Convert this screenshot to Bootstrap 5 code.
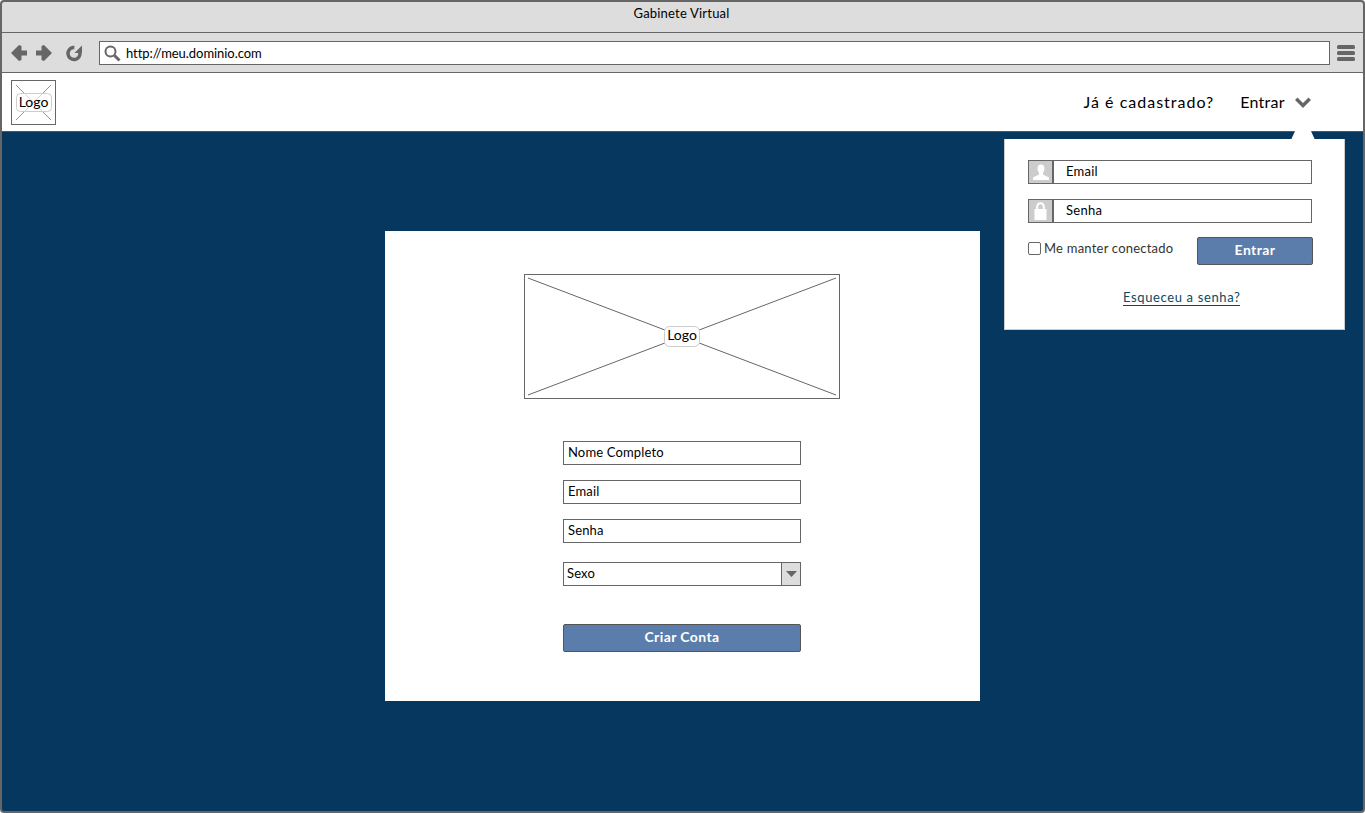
<!DOCTYPE html>
<html lang="pt">
<head>
<meta charset="utf-8">
<title>Gabinete Virtual</title>
<link href="https://cdn.jsdelivr.net/npm/bootstrap@5.3.0/dist/css/bootstrap.min.css" rel="stylesheet">
<style>
html,body{height:813px;overflow:hidden;background:#fff}
body{font-family:"Lato","Noto Sans",sans-serif;color:#000;font-size:13px}
.win{height:813px;width:1365px;border:2px solid #666;border-radius:4px;overflow:hidden;position:relative;background:#05375f}
.titlebar{height:31px;background:#ddd;border-bottom:1px solid #666;font-size:13px;line-height:22px;letter-spacing:.2px;padding-right:2px}
.toolbar{height:40px;background:#ddd;border-bottom:1px solid #666;padding:1px 7px 0 8px}
.urlbox{height:24px;width:1231px;margin-left:15px;margin-right:7px;background:#fff;border:1px solid #666;padding-left:4px;gap:5px;line-height:1;letter-spacing:-.05px}
.hdr{height:59px;background:#fff;border-bottom:1px solid #555;padding:0 52px 0 9px}
.logo-sm{width:45px;height:45px;flex:none}
.hdr-txt{font-size:16px}
.hdr-q{letter-spacing:1px}
.hdr-in{letter-spacing:.3px;margin-left:26px}
.hdr-chev{margin-left:10px}
.stage{height:680px;padding:99px 0 0 383px;position:relative}
.sheet{width:595px;height:470px;background:#fff;padding-top:43px}
.logo-lg{width:316px;height:125px;display:block;margin:0 0 42px 139px}
.fld{width:238px;height:24px;border:1px solid #666;background:#fff;padding-left:4px;line-height:21px;letter-spacing:.15px;margin:0 auto 15px 178px}
.sel{margin-top:19px;margin-bottom:38px;padding:0;padding-left:3px}
.sel-arrow{width:19px;height:22px;background:#ddd;border-left:1px solid #666;flex:none}
.act{background:#5a7dab;border:1px solid #555;border-radius:2px;color:#fff;font-weight:700;font-size:14px;letter-spacing:.4px;padding:0 0 2px;line-height:1}
.act:hover{background:#5a7dab;color:#fff;border-color:#555}
.act-wide{display:block;width:238px;height:28px;margin-left:178px}
.pop{position:absolute;left:1002px;top:7px;width:341px;height:191px;background:#fff;border:1px solid #ccc;border-top:0;padding:21px 32px 0 23px}
.pop-tip{position:absolute;left:286px;top:-8px;width:24px;height:9px}
.grp{height:24px;width:284px;margin-bottom:15px;border:1px solid #666;letter-spacing:.25px}
.grp-ic{width:25px;height:22px;background:#ccc;border-right:2px solid #666;flex:none}
.grp-tx{padding-left:12px;line-height:20px}
.rowline{margin-top:-1px;height:28px;width:285px}
.chk{width:13px;height:13px;border:1px solid #666;border-radius:2px;background:#fff;flex:none;margin-right:3px}
.chk-lbl{color:#333;letter-spacing:.22px}
.chk-wrap{margin-top:-5px}
.act-sm{width:116px;height:28px}
.forgot{display:block;width:max-content;margin:25px 0 0 95px;color:#0a4a5c;letter-spacing:.63px;text-decoration:none;border-bottom:1px solid #0a4a5c;line-height:15px}
</style>
</head>
<body>
<div class="win">
  <div class="titlebar text-center">Gabinete Virtual</div>
  <div class="toolbar d-flex align-items-center">
    <svg width="74" height="18" viewBox="0 0 74 18" fill="#666" aria-hidden="true">
      <path d="M9 1 1 9l8 8 2.500-1V11.500H17V6.500H11.500V2z"/>
      <path d="M34 1 42 9l-8 8-2.500-1V11.500H26V6.500h5.500V2z"/>
      <circle cx="64" cy="9.500" r="6" fill="none" stroke="#666" stroke-width="3.500" stroke-dasharray="29 9" transform="rotate(-10 64 9.500)"/>
      <path d="M72 1.500V9h-7.500z"/>
    </svg>
    <div class="urlbox d-flex align-items-center">
      <svg width="17" height="17" viewBox="0 0 17 17" fill="none" stroke="#666" aria-hidden="true"><circle cx="6.500" cy="6.500" r="5" stroke-width="2"/><path d="m10.500 10.500 5 5" stroke-width="3"/></svg>
      <span>http://meu.dominio.com</span>
    </div>
    <svg width="18" height="16" viewBox="0 0 18 16" fill="#666" aria-hidden="true"><rect y="0" width="18" height="4" rx="1.500"/><rect y="6" width="18" height="4" rx="1.500"/><rect y="12" width="18" height="4" rx="1.500"/></svg>
  </div>
  <div class="hdr d-flex align-items-center justify-content-between">
    <svg class="logo-sm" viewBox="0 0 45 45" aria-hidden="true">
      <rect x=".5" y=".5" width="44" height="44" fill="#fff" stroke="#666"/>
      <path d="M5 5 40 40M40 5 5 40" stroke="#777" stroke-width=".8"/>
      <rect x="5.500" y="13.500" width="35" height="18" rx="4" fill="#fff" fill-opacity=".65" stroke="#ccc"/>
      <text x="22.500" y="26.500" text-anchor="middle" font-family="Lato, sans-serif" font-size="14" fill="#000">Logo</text>
    </svg>
    <div class="hdr-txt d-flex align-items-center">
      <span class="hdr-q">Já é cadastrado?</span>
      <span class="hdr-in">Entrar</span>
      <svg class="hdr-chev" width="16" height="12" viewBox="0 0 16 12" fill="#666" aria-hidden="true"><path d="M0 4 2.500 1.500 8 7l5.500-5.500L16 4l-8 8z"/></svg>
    </div>
  </div>
  <div class="stage">
    <div class="sheet">
      <svg class="logo-lg" viewBox="0 0 316 125" aria-hidden="true">
        <rect x=".5" y=".5" width="315" height="124" fill="#fff" stroke="#666"/>
        <path d="M4 4 312 121M312 4 4 121" stroke="#666"/>
        <rect x="140.500" y="52.500" width="35" height="20" rx="5" fill="#fff" stroke="#ccc"/>
        <text x="158" y="66" text-anchor="middle" font-family="Lato, sans-serif" font-size="14" fill="#000">Logo</text>
      </svg>
      <div class="fld">Nome Completo</div>
      <div class="fld">Email</div>
      <div class="fld">Senha</div>
      <div class="fld sel d-flex justify-content-between">
        <span>Sexo</span>
        <span class="sel-arrow d-flex align-items-center justify-content-center">
          <svg width="11" height="6" viewBox="0 0 11 6" fill="#666" aria-hidden="true"><path d="M0 0h11L5.500 6z"/></svg>
        </span>
      </div>
      <button type="button" class="btn act act-wide">Criar Conta</button>
    </div>
    <div class="pop">
      <svg class="pop-tip" viewBox="0 0 24 9" aria-hidden="true"><path d="M0 9 4 0h16l4 9z" fill="#fff"/></svg>
      <div class="grp d-flex">
        <span class="grp-ic d-flex align-items-center justify-content-center">
          <svg width="18" height="17" viewBox="0 0 18 17" fill="#fff" aria-hidden="true"><path d="M5.500 4.500C5.500 2 7 .5 9 .5s3.500 1.500 3.500 4c0 2-1 3.500-1.500 4.500v1.500l6 3V16H1v-2.500l6-3V9C6.500 8 5.500 6.500 5.500 4.500z"/></svg>
        </span>
        <span class="grp-tx">Email</span>
      </div>
      <div class="grp d-flex">
        <span class="grp-ic d-flex align-items-center justify-content-center">
          <svg width="13" height="18" viewBox="0 0 13 18" aria-hidden="true"><path d="M3.200 8V4.500a3.300 3.300 0 0 1 6.600 0V8" fill="none" stroke="#fff" stroke-width="2"/><rect x=".5" y="7" width="12" height="11" fill="#fff"/></svg>
        </span>
        <span class="grp-tx">Senha</span>
      </div>
      <div class="rowline d-flex align-items-center justify-content-between">
        <span class="chk-wrap d-flex align-items-center"><span class="chk"></span><span class="chk-lbl">Me manter conectado</span></span>
        <button type="button" class="btn act act-sm">Entrar</button>
      </div>
      <a class="forgot" href="#">Esqueceu a senha?</a>
    </div>
  </div>
</div>
</body>
</html>
